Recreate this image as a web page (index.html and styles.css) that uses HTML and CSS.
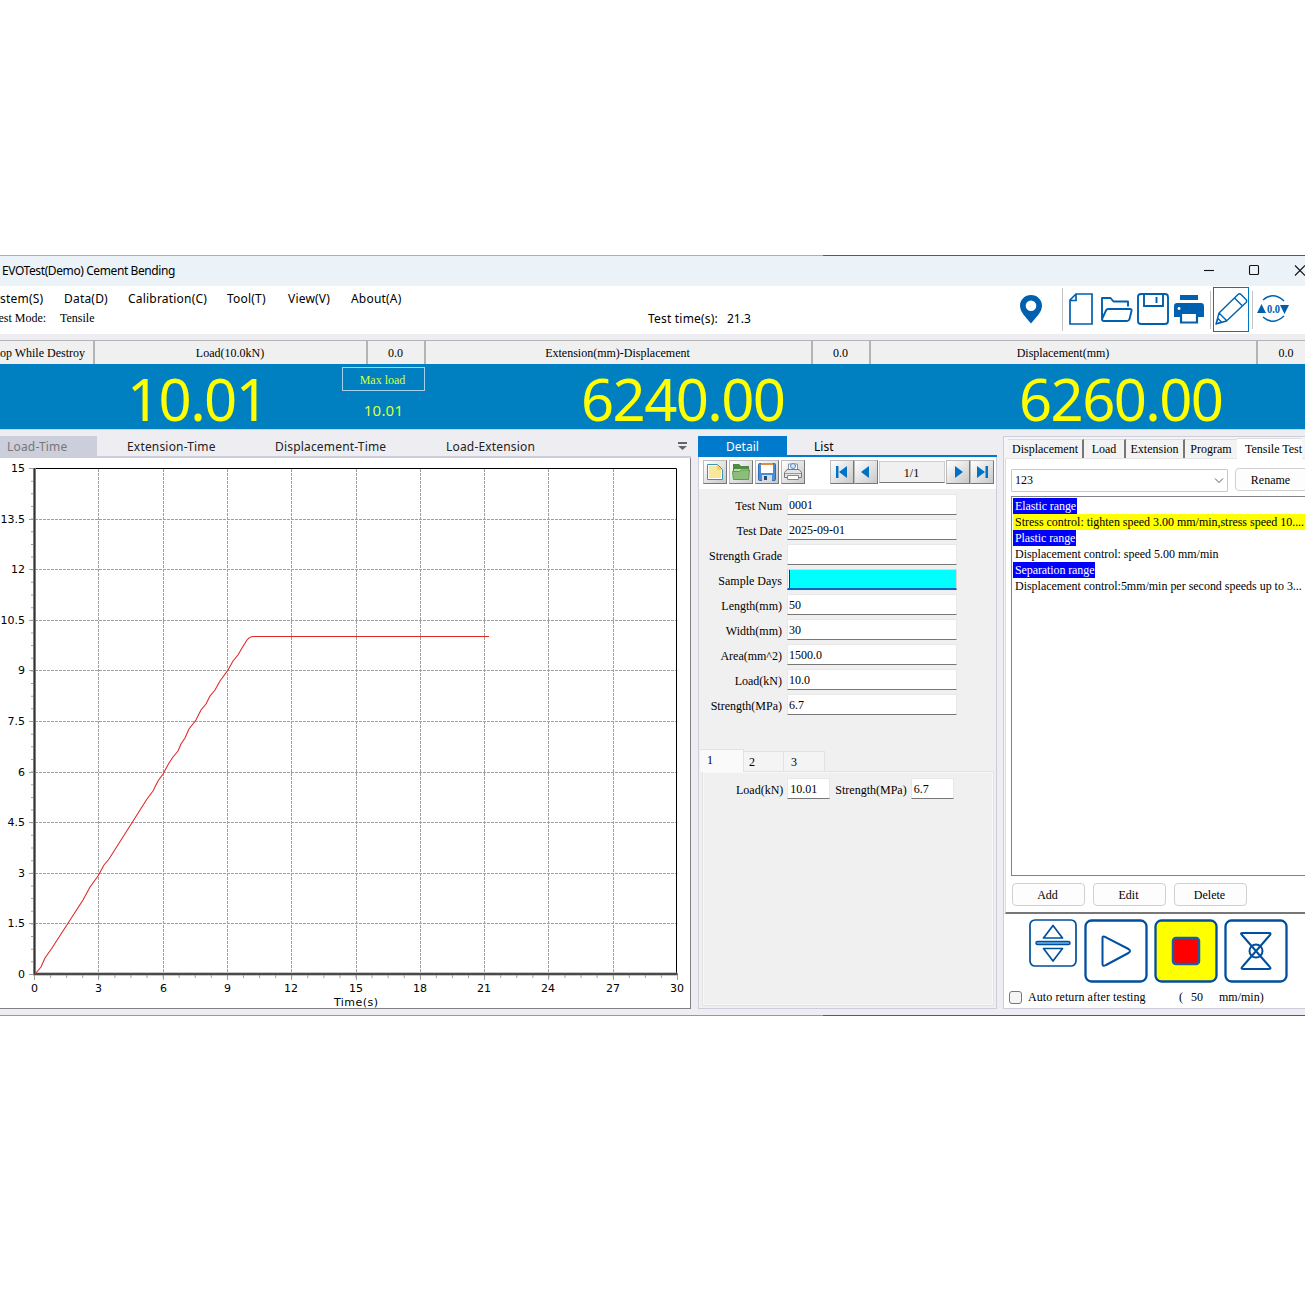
FILE: index.html
```html
<!DOCTYPE html>
<html lang="en">
<head>
    <meta charset="UTF-8">
    <meta name="viewport" content="width=device-width, initial-scale=1.0">
    <title>EVOTest(Demo) Cement Bending</title>
    <link rel="stylesheet" href="styles.css">
</head>
<body>
    <div class="window">
        <div class="titlebar">
            <span class="title">EVOTest(Demo) Cement Bending</span>
            <svg class="win-buttons" width="105" height="30" viewBox="0 0 105 30" fill="none" stroke="#111" stroke-width="1.1">
                <path d="M4 14.500h10"/>
                <rect x="49.500" y="9.500" width="9" height="9" rx="1"/>
                <path d="M95 9.500l10 10M105 9.500l-10 10"/>
            </svg>
        </div>

        <div class="top">
            <div class="menus">
                <div class="menu">
                    <span class="m-system">System(S)</span>
                    <span class="m-data">Data(D)</span>
                    <span class="m-cal">Calibration(C)</span>
                    <span class="m-tool">Tool(T)</span>
                    <span class="m-view">View(V)</span>
                    <span>About(A)</span>
                </div>
                <div class="status">
                    <span class="mode-label">Test Mode:</span>
                    <span class="mode">Tensile</span>
                    <span class="time-label">Test time(s):</span>
                    <span class="time">21.3</span>
                </div>
            </div>
            <!-- main toolbar -->
            <svg class="toolbar" width="295" height="48" viewBox="1010 286 295 48" fill="none" stroke="#0060b0" stroke-width="2">
                <path fill="#0060b0" stroke="none" fill-rule="evenodd" d="M1031 295c-6.200 0-11 4.800-11 10.800 0 6.500 6 11.500 11 17.700 5-6.200 11-11.200 11-17.700 0-6-4.800-10.800-11-10.800zM1031 300.500a5.300 5.300 0 1 1 0 10.600a5.300 5.300 0 1 1 0-10.600z"/>
                <path stroke="#c4c4c4" stroke-width="1" d="M1062.500 288v43M1210.500 291v38M1252.500 291v38"/>
                <path d="M1070 300v24h22v-30h-16zM1070 300.500h6v-6.500" stroke-width="1.700"/>
                <path d="M1102 320v-22h8.500l3 3.500h14.500v5M1102 319l4-8.500q.7-1.500 2-1.500h22q2 0 1.500 2l-2 8q-.5 2-2.500 2h-23q-2 0-2-2z" stroke-width="1.900" stroke-linejoin="round"/>
                <rect x="1138" y="294" width="30" height="30" rx="3" stroke-width="1.900"/>
                <path d="M1144 294v12h19v-12M1156.500 297v6" stroke-width="1.900"/>
                <path fill="#0060b0" stroke="none" fill-rule="evenodd" d="M1180 295h18v5h-18zM1177 303h24q3 0 3 3v11h-6v-5h-18v5h-6v-11q0-3 3-3zM1179 307a1.500 1.500 0 1 0 .1 0z"/>
                <path d="M1181 313h16v9.500h-16z" stroke-width="2.200"/>
                <rect x="1213.500" y="287.500" width="35" height="44" stroke="#0078c8" stroke-width="1"/>
                <path d="M1216 324l3-11 19-18.500q1.500-1.500 3 0l5 5q1.500 1.500 0 3l-19.500 18.500zM1219 313l8 8M1234.500 298l8 8M1216 324l2-5.500 3.500 3.500z" stroke-width="1.400" stroke-linejoin="round"/>
                <path d="M1263 300q10-9 21 1M1263 317q10 9 21-1" stroke-width="1.400"/>
                <path fill="#0060b0" stroke="none" d="M1257 313l4.500-9 4.500 9zM1280 305h9l-4.500 9z"/>
                <text class="zero-text" x="1267" y="313" textLength="13" lengthAdjust="spacingAndGlyphs">0.0</text>
            </svg>
        </div>

        <div class="channel-heads">
            <div class="head h-stop"><span>Stop While Destroy</span></div>
            <div class="head h-load">Load(10.0kN)</div>
            <div class="head h-zero1">0.0</div>
            <div class="head h-ext">Extension(mm)-Displacement</div>
            <div class="head h-zero2">0.0</div>
            <div class="head h-disp">Displacement(mm)</div>
            <div class="head h-zero3">0.0</div>
        </div>
        <div class="readout">
            <div class="value v-load">10.01</div>
            <div class="max">
                <div class="max-button">Max load</div>
                <div class="max-value">10.01</div>
            </div>
            <div class="value v-ext">6240.00</div>
            <div class="value v-disp">6260.00</div>
        </div>

        <div class="workspace">
            <!-- curves -->
            <div class="chart-panel">
                <div class="chart-tabs">
                    <span class="tab t-lt">Load-Time</span>
                    <span class="tab t-et">Extension-Time</span>
                    <span class="tab t-dt">Displacement-Time</span>
                    <span class="tab t-le">Load-Extension</span>
                    <svg width="10" height="8" viewBox="0 0 10 8"><path fill="#666" d="M0 0h9v2h-9zM0 4h9l-4.500 4z"/></svg>
                </div>
                <svg class="chart" width="690" height="550" viewBox="0 458 690 550" fill="none">
                    <path stroke="#a0a0a0" stroke-dasharray="3 1" d="M98.500 469v504M163.500 469v504M227.500 469v504M291.500 469v504M356.500 469v504M420.500 469v504M484.500 469v504M548.500 469v504M613.500 469v504M35 519.500h642M35 569.500h642M35 620.500h642M35 670.500h642M35 721.500h642M35 772.500h642M35 822.500h642M35 873.500h642M35 923.500h642"/>
                    <path stroke="#a0a0a0" d="M29 468.500h5M29 519.500h5M29 569.500h5M29 620.500h5M29 670.500h5M29 721.500h5M29 772.500h5M29 822.500h5M29 873.500h5M29 923.500h5M29 974.500h5M34.500 974v6M98.500 974v6M163.500 974v6M227.500 974v6M291.500 974v6M356.500 974v6M420.500 974v6M484.500 974v6M548.500 974v6M613.500 974v6M677.500 974v6"/>
                    <!-- minor ticks -->
                    <path stroke="#a0a0a0" stroke-width="3" stroke-dasharray="1 11.650" d="M32.500 468v506"/>
                    <path stroke="#a0a0a0" stroke-width="3" stroke-dasharray="1 15.075" d="M34 976.500h643"/>
                    <path stroke="#000" d="M34 468.500h642.500v505"/>
                    <path stroke="#909090" stroke-width="3" d="M34.500 468v506h643"/>
                    <path stroke="#333" stroke-width="1.400" d="M34.500 468v506h643"/>
                    <path stroke="#e02a2a" stroke-width="1.100" d="M35 974L41 967 45 958 52 948 83 900 90 887 98 876 104 865 109 859 135 818 147 799 153 791 158 781 163 774 169 763 173 757 178 751 181 744 185 738 189 729 196 720 201 710 206 704 210 696 215 690 220 681 228 670 233 661 238 655 242 648 247 640Q250 636.500 253 636.500H489"/>
                    <g class="axis y-axis">
                        <text x="25" y="472">15</text>
                        <text x="25" y="523">13.5</text>
                        <text x="25" y="573">12</text>
                        <text x="25" y="624">10.5</text>
                        <text x="25" y="674">9</text>
                        <text x="25" y="725">7.5</text>
                        <text x="25" y="776">6</text>
                        <text x="25" y="826">4.5</text>
                        <text x="25" y="877">3</text>
                        <text x="25" y="927">1.5</text>
                        <text x="25" y="978">0</text>
                    </g>
                    <g class="axis x-axis">
                        <text x="34.500" y="992">0</text>
                        <text x="98.500" y="992">3</text>
                        <text x="163.500" y="992">6</text>
                        <text x="227.500" y="992">9</text>
                        <text x="291" y="992">12</text>
                        <text x="356" y="992">15</text>
                        <text x="420" y="992">18</text>
                        <text x="484" y="992">21</text>
                        <text x="548" y="992">24</text>
                        <text x="613" y="992">27</text>
                        <text x="677" y="992">30</text>
                        <text x="356" y="1006" textLength="44">Time(s)</text>
                    </g>
                </svg>
            </div>

            <!-- specimen details -->
            <div class="detail-panel">
                <div class="detail-tabs">
                    <span class="d-active">Detail</span>
                    <span class="d-list">List</span>
                </div>
                <div class="detail-body">
                    <div class="detail-tools">
                        <div class="tool"><svg width="20" height="20" viewBox="0 0 20 20"><path fill="#fff" stroke="#3c93b8" d="M2.500 2.500h10l5 5v10h-15z"/><path fill="#f8e89c" d="M4 4h8v4h4v8h-12z"/><path fill="#f5d35c" d="M12 2.500v5.500h5.500z"/></svg></div>
                        <div class="tool"><svg width="20" height="20" viewBox="0 0 20 20"><path fill="#4d8b44" d="M2 2h6l2 2h8v6h-16z"/><path fill="#bddca8" d="M3 7h14v3h-14z"/><path fill="#8dbd7a" stroke="#5f9950" d="M1.500 9.500h7l1.500-1.500h8.500l-1 9.500h-15z"/></svg></div>
                        <div class="tool"><svg width="20" height="20" viewBox="0 0 20 20"><rect x="1.500" y="1.500" width="17" height="17" rx="1" fill="#4b8cd2" stroke="#2f69b0"/><path fill="#fff" d="M4 2h12v9h-12z"/><path fill="#e58b3c" d="M4 1h12v2h-12z"/><path fill="#d5dbe5" d="M5 13h10v6h-10z"/><path fill="#244779" d="M7 14h3v4h-3z"/></svg></div>
                        <div class="tool"><svg width="20" height="20" viewBox="0 0 20 20"><path fill="#fff" stroke="#8a8f98" d="M5.500 8v-6h9v6"/><circle cx="10" cy="4" r="2.500" fill="#d5e5fa" stroke="#5688cb"/><path fill="#e3e4e6" stroke="#777" d="M4 7.500h12l2.500 3v5h-17v-5z"/><path stroke="#999" d="M2 11.500h16"/><path fill="#fff" stroke="#888" d="M4.500 13.500h11v4h-11z"/></svg></div>
                        <div class="pager">
                            <div class="tool"><svg width="20" height="20" viewBox="0 0 20 20" fill="#0072c6"><path d="M4 4h2.500v12h-2.500zM15 4v12l-8-6z"/></svg></div>
                            <div class="tool"><svg width="20" height="20" viewBox="0 0 20 20" fill="#0072c6"><path d="M13 4v12l-8-6z"/></svg></div>
                            <div class="page">1/1</div>
                            <div class="tool"><svg width="20" height="20" viewBox="0 0 20 20" fill="#0072c6"><path d="M7 4v12l8-6z"/></svg></div>
                            <div class="tool"><svg width="20" height="20" viewBox="0 0 20 20" fill="#0072c6"><path d="M13.500 4h2.500v12h-2.500zM5 4v12l8-6z"/></svg></div>
                        </div>
                    </div>
                    <div class="fields">
                        <label>Test Num</label><div class="field">0001</div>
                        <label>Test Date</label><div class="field">2025-09-01</div>
                        <label>Strength Grade</label><div class="field"></div>
                        <label>Sample Days</label><div class="field focused"></div>
                        <label>Length(mm)</label><div class="field">50</div>
                        <label>Width(mm)</label><div class="field">30</div>
                        <label>Area(mm^2)</label><div class="field">1500.0</div>
                        <label>Load(kN)</label><div class="field">10.0</div>
                        <label>Strength(MPa)</label><div class="field">6.7</div>
                    </div>
                    <div class="sample-tabs">
                        <span class="s-active">1</span>
                        <span>2</span>
                        <span>3</span>
                    </div>
                    <div class="sample-body">
                        <label>Load(kN)</label><div class="field">10.01</div>
                        <label class="second">Strength(MPa)</label><div class="field">6.7</div>
                    </div>
                </div>
            </div>

            <!-- control program -->
            <div class="control-panel">
                <div class="control-tabs">
                    <span class="c-disp">Displacement</span>
                    <span class="c-load">Load</span>
                    <span class="c-ext">Extension</span>
                    <span class="c-prog">Program</span>
                    <span class="c-tensile">Tensile Test</span>
                </div>
                <div class="control-page">
                    <div class="select-row">
                        <div class="select">
                            <span>123</span>
                            <svg width="10" height="6" viewBox="0 0 10 6" fill="none" stroke="#555"><path d="M1 .5l4 4 4-4"/></svg>
                        </div>
                        <div class="button rename">Rename</div>
                    </div>
                    <div class="steps">
                        <div class="stage"><span>Elastic range</span></div>
                        <div class="step current">Stress control: tighten speed 3.00 mm/min,stress speed 10....</div>
                        <div class="stage"><span>Plastic range</span></div>
                        <div class="step">Displacement control: speed 5.00 mm/min</div>
                        <div class="stage"><span>Separation range</span></div>
                        <div class="step last">Displacement control:5mm/min per second speeds up to 3...</div>
                    </div>
                    <div class="step-buttons">
                        <div class="button">Add</div>
                        <div class="button">Edit</div>
                        <div class="button">Delete</div>
                    </div>
                </div>
                <div class="run-area">
                    <svg width="300" height="70" viewBox="1004 916 300 70" fill="#fff" stroke="#004f9e" stroke-width="2" stroke-linejoin="round">
                        <rect x="1030" y="920" width="46" height="46" rx="5" stroke-width="1.700"/>
                        <path d="M1053 925.500l9.500 12.500h-19zM1053 961l9.500-12.500h-19z" stroke-width="1.700"/>
                        <rect x="1036" y="941.500" width="34" height="3" rx="1.500" fill="#69b4ea" stroke-width="1.500"/>
                        <rect x="1085.500" y="920.500" width="61" height="61" rx="6" stroke-width="2.300"/>
                        <path d="M1102.500 938q0-2 2-1.300l24 12.300q3 2 0 4l-22.500 12q-3.500 2-3.500-1z"/>
                        <rect x="1155.500" y="920.500" width="61" height="61" rx="6" fill="#ff0" stroke-width="2.300"/>
                        <rect x="1173" y="938" width="26" height="26" rx="3" fill="#f00" stroke="#1c5ba8" stroke-width="2.500"/>
                        <rect x="1225.500" y="920.500" width="61" height="61" rx="6" stroke-width="2.300"/>
                        <path d="M1242 933h28q1 1 0 2l-27 31q-3 3 0 3h26q3 0 0-3l-27-31q-2-2 0-2z" fill="none"/>
                        <circle cx="1256" cy="951" r="6.500" fill="none"/>
                    </svg>
                    <div class="auto-row">
                        <span class="check"></span>
                        <span class="auto">Auto return after testing</span>
                        <span class="paren">(</span>
                        <span class="speed">50</span>
                        <span class="unit">mm/min)</span>
                    </div>
                </div>
            </div>
        </div>
    </div>
</body>
</html>
```
FILE: styles.css
```css
* {
    margin: 0;
    padding: 0;
    box-sizing: border-box;
}

body {
    width: 100vw;
    height: 100vh;
    padding-top: 255px;
    background: #fff;
    color: #000;
    font-family: "Liberation Serif", serif;
    font-size: 12px;
    overflow: hidden;
}

svg {
    display: block;
    flex-shrink: 0;
}

span, label {
    white-space: nowrap;
    flex-shrink: 0;
}

.window {
    width: 1305px;
    height: 761px;
    padding: 1px 0;
    background:
        linear-gradient(to right, #aeaeb2 823px, #3e5f88 823px) top / 100% 1px no-repeat,
        linear-gradient(to right, #98989c 823px, #3e5f88 823px) bottom / 100% 1px no-repeat,
        #eeeef2;
    overflow: hidden;
}

.titlebar {
    display: flex;
    justify-content: space-between;
    height: 30px;
    line-height: 30px;
    padding-left: 2px;
    background: #ecf3f8;
    font-family: "Noto Sans", sans-serif;
    font-size: 12px;
}

.title {
    letter-spacing: -0.4px;
}

/* menu and toolbar */
.top {
    display: flex;
    height: 48px;
    background: #fff;
}

.menus {
    width: 1010px;
    font-family: "Noto Sans", sans-serif;
    font-size: 12px;
}

.menu {
    display: flex;
    height: 23px;
    line-height: 26px;
    margin-left: -13px;
    letter-spacing: 0.2px;
}

.m-system { width: 77px; }
.m-data { width: 64px; }
.m-cal { width: 99px; }
.m-tool { width: 61px; }
.m-view { width: 63px; }

.status {
    display: flex;
    height: 20px;
    line-height: 20px;
    margin-left: -8px;
}

.mode-label,
.mode {
    font-family: "Liberation Serif", serif;
    line-height: 19px;
}

.mode-label { width: 68px; }
.mode { width: 588px; }
.time-label { width: 79px; letter-spacing: 0.2px; }

.zero-text {
    fill: #0060b0;
    stroke: none;
    font: bold 12px "Liberation Serif", serif;
}

.channel-heads {
    display: flex;
    height: 24px;
    margin-top: 6px;
}

.head {
    height: 24px;
    border-top: 1px solid #b4b4b4;
    border-right: 2px solid #b4b4b4;
    background: #f0f0f0;
    line-height: 24px;
    text-align: center;
}

.h-stop {
    display: flex;
    justify-content: flex-end;
    width: 95px;
    padding-right: 8px;
}

.h-load { width: 273px; padding-right: 1px; }
.h-zero1 { width: 58px; padding-right: 1px; }
.h-ext { width: 387px; padding-right: 2px; }
.h-zero2 { width: 58px; padding-right: 1px; }
.h-disp { width: 387px; padding-right: 1px; }
.h-zero3 { width: 47px; padding-left: 9px; border-right: none; }

.readout {
    display: flex;
    height: 66px;
    background: #0080c0;
    border-bottom: 1px solid #b5d8ec;
    color: #ff0;
    font-family: "Noto Sans", sans-serif;
}

.value {
    font-size: 58px;
    line-height: 70px;
    letter-spacing: -1.600px;
}

.v-load { width: 342px; padding-left: 127px; }
.v-ext { width: 438px; padding-left: 156px; }
.v-disp { padding-left: 156px; }

.max {
    width: 83px;
    padding-top: 3px;
    text-align: center;
}

.max-button {
    height: 24px;
    padding-right: 2px;
    border: 1px solid #a5d2ea;
    font: 12px/24px "Liberation Serif", serif;
    color: #d8ff40;
}

.max-value {
    font-size: 15px;
    line-height: 39px;
    letter-spacing: 0.2px;
    color: #d8ff40;
}

.workspace {
    display: flex;
    height: 585px;
    padding-top: 6px;
}

/* curves */
.chart-panel {
    width: 691px;
    height: 573px;
    border-right: 1px solid #808086;
    border-bottom: 1px solid #808086;
    background: #fff;
}

.chart-tabs {
    display: flex;
    align-items: center;
    height: 22px;
    width: 691px;
    border-bottom: 2px solid #cccedb;
    background: #eeeef2;
    font: 12px/22px "Noto Sans", sans-serif;
    letter-spacing: 0.18px;
    color: #222;
}

.tab {
    height: 20px;
}

.t-lt {
    width: 97px;
    padding-left: 7px;
    background: #cccedb;
    color: #777;
}

.t-et { width: 178px; padding-left: 30px; }
.t-dt { width: 171px; }
.t-le { width: 232px; }

.axis text {
    fill: #000;
    font: 11px "DejaVu Sans", sans-serif;
}

.y-axis { text-anchor: end; }
.x-axis { text-anchor: middle; }

/* details */
.detail-panel {
    width: 299px;
    margin-left: 7px;
}

.detail-tabs {
    display: flex;
    height: 21px;
    border-bottom: 2px solid #007acc;
    font: 12px/21px "Noto Sans", sans-serif;
}

.d-active {
    width: 89px;
    background: #007acc;
    color: #fff;
    text-align: center;
}

.d-list {
    padding-left: 27px;
}

.detail-body {
    height: 552px;
    border: 1px solid #cccedb;
    border-top: none;
    background: #f0f0f0;
}

.detail-tools {
    display: flex;
    gap: 2px;
    height: 32px;
    padding: 3px 0 0 4px;
    background: #fff;
}

.tool {
    width: 24px;
    height: 24px;
    padding: 1px;
    border: 1px solid #777;
    border-top-color: #bbb;
    border-left-color: #bbb;
    background: linear-gradient(135deg, #fff, #c8c8c8);
}

.pager {
    display: flex;
    margin-left: 23px;
}

.page {
    width: 66px;
    height: 22px;
    margin: 1px 1px 0;
    padding-right: 1px;
    border: 1px solid #ccc;
    border-bottom-color: #777;
    background: #f0f0f0;
    line-height: 22px;
    text-align: center;
}

.fields {
    display: grid;
    grid-template-columns: 83px 170px;
    grid-auto-rows: 20px;
    column-gap: 5px;
    row-gap: 5px;
    padding-top: 5px;
}

.fields label,
.sample-body label {
    line-height: 24px;
    text-align: right;
}

.field {
    height: 21px;
    padding-left: 2px;
    background: #fff;
    border: 1px solid #e8e8e8;
    border-bottom-color: #777;
    line-height: 20px;
}

.fields .field {
    padding-left: 1px;
}

.focused {
    border: 1px solid #d8d8d8;
    border-bottom: 2px solid #0067c0;
    background: #0ff;
    box-shadow: inset 1px 0 #fff, inset 2px 0 #333;
}

.sample-tabs {
    display: flex;
    align-items: flex-end;
    height: 24px;
    margin-top: 34px;
    padding-left: 1px;
}

.sample-tabs span {
    width: 40px;
    height: 21px;
    padding-left: 5px;
    border: 1px solid #e2e2e2;
    border-left: none;
    background: #f4f4f4;
    line-height: 20px;
}

.sample-tabs span:last-child {
    width: 41px;
    padding-left: 7px;
}

.sample-tabs .s-active {
    width: 44px;
    height: 23px;
    padding-left: 7px;
    border-bottom: none;
    background: #fafafa;
}

.sample-body {
    display: flex;
    height: 235px;
    margin: -1px 2px 0 3px;
    padding: 6px 0 0 33px;
    border: 1px solid #e2e2e2;
    box-shadow: inset 0 0 0 1px #f8f8f8;
}

.sample-body .field {
    width: 43px;
    margin-left: 4px;
}

.sample-body .second {
    margin-left: 5px;
}

/* control program */
.control-panel {
    width: 302px;
    height: 573px;
    margin-left: 6px;
    border: 1px solid #cccedb;
    border-right: none;
    background: #f5f5f5;
    overflow: hidden;
}

.control-tabs {
    display: flex;
    height: 21px;
    padding-top: 2px;
    padding-left: 4px;
    line-height: 18px;
}

.control-tabs span {
    height: 19px;
    border-top: 1px solid #ddd;
    border-right: 2px solid #777;
    background: #f3f3f3;
    text-align: center;
}

.c-disp { width: 76px; }
.c-load { width: 42px; }
.c-ext { width: 59px; }

.control-tabs .c-prog {
    width: 52px;
    border-right: none;
}

.control-tabs .c-tensile {
    height: 21px;
    margin-top: -1px;
    padding-left: 8px;
    border-right: none;
    background: #fff;
    line-height: 20px;
}

.control-page {
    height: 456px;
    margin-left: 1px;
    padding: 9px 0 0 5px;
    border-top: 1px solid #e5e5e5;
    border-left: 1px solid #ddd;
    border-bottom: 2px solid #777;
    background: #fff;
}

.select-row {
    display: flex;
    gap: 7px;
    height: 28px;
}

.select {
    display: flex;
    justify-content: space-between;
    align-items: center;
    flex-shrink: 0;
    width: 217px;
    height: 23px;
    margin-top: 1px;
    padding: 0 3px;
    border: 1px solid #c8c8c8;
    border-radius: 1px;
}

.button {
    width: 73px;
    height: 23px;
    flex-shrink: 0;
    padding-right: 2px;
    border: 1px solid #d0d0d0;
    border-radius: 4px;
    background: #fdfdfd;
    line-height: 23px;
    text-align: center;
}

.steps {
    width: 300px;
    height: 380px;
    padding: 1px;
    border: 1px solid #82828a;
    line-height: 16px;
    white-space: nowrap;
}

.stage,
.step {
    height: 16px;
    padding-left: 2px;
}

.step {
    letter-spacing: -0.02px;
}

.stage {
    padding-left: 0;
}

.stage span {
    display: inline-block;
    height: 16px;
    padding: 0 1px 0 2px;
    background: #00f;
    color: #fff;
    letter-spacing: -0.1px;
}

.current {
    background: #ff0;
}

.step-buttons {
    display: flex;
    gap: 8px;
    padding: 7px 0 0 1px;
}

.run-area {
    height: 96px;
    padding-top: 2px;
    background: #fff;
}

.auto-row {
    display: flex;
    align-items: center;
    height: 22px;
    padding-left: 5px;
}

.check {
    width: 13px;
    height: 13px;
    margin-right: 6px;
    border: 1px solid #777;
    border-radius: 3px;
    background: #f5f5f5;
}

.auto { width: 151px; letter-spacing: 0.08px; }
.paren { width: 12px; }
.speed { width: 28px; }
```
